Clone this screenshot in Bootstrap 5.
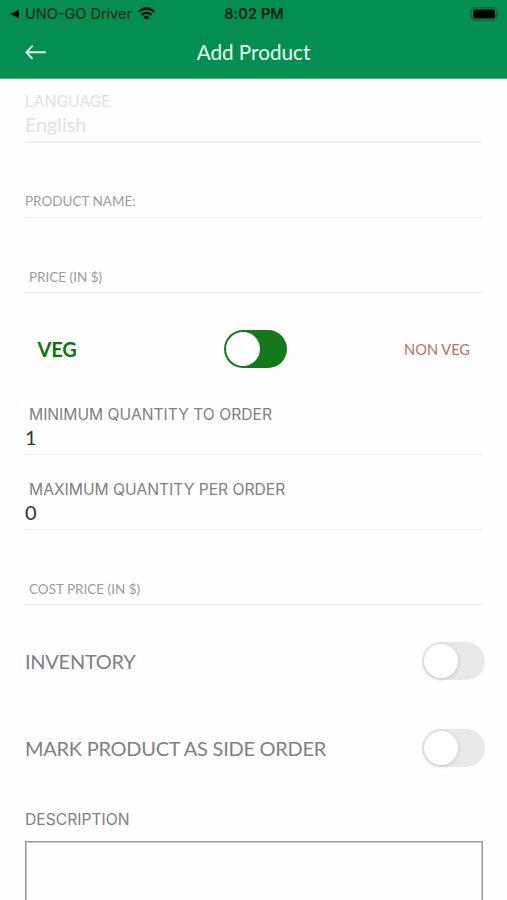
<!DOCTYPE html>
<html lang="en">
<head>
<meta charset="utf-8">
<meta name="viewport" content="width=device-width, initial-scale=1">
<title>Add Product</title>
<link href="https://cdn.jsdelivr.net/npm/bootstrap@5.3.0/dist/css/bootstrap.min.css" rel="stylesheet">
<style>
  body { font-family: Lato, "Open Sans", sans-serif; background: #fefefe; color: #808080; height: 900px; overflow: hidden; }
  .app-head { background: #048e52; height: 79px; border-bottom: 1px solid #45b584; }
  .status { height: 27px; font: 14.5px/27px Inter, sans-serif; color: #06200f; padding: 0 7px 0 10px; }
  .status-side { flex: 1 1 0; }
  .app-name { margin-left: 5px; margin-right: 5px; }
  .clock { letter-spacing: .12px; margin-right: 2px; }
  .title-bar { height: 50px; padding: 0 25px; color: #e9fbf1; font-size: 20.7px; line-height: 50px; }
  .title-side { width: 22px; }
  .form-body { padding: 0 24px 0 25px; }
  .field { height: 75px; border-bottom: 1px solid #eee; white-space: nowrap; padding-bottom: 4px; }
  .field-first { height: 64px; border-bottom: 2px solid #f0f0f0; color: #e0e0e0; margin-right: 1px; }
  .field-hint { padding-bottom: 5px; }
  .field-name { padding-bottom: 6px; }
  .field-money { margin: 0 -1px; padding-left: 1px; }
  .field-tight { height: 51px; }
  .cap { font: 15.65px/20px Inter, sans-serif; }
  .val { font-size: 20px; line-height: 25px; color: #333; }
  .field-first .val { color: inherit; font-size: 19.7px; }
  .hint { font-size: 13.5px; line-height: 20px; color: #9c9c9c; }
  .inset { padding-left: 4px; }
  .veg-row { height: 111px; padding: 0 10px 0 12.5px; }
  .veg-side { flex: 1 1 0; }
  .veg { font-size: 20px; font-weight: 700; color: #0b780f; letter-spacing: -.2px; }
  .nonveg { font-size: 14.6px; color: #b9705f; padding: 2px 3px 0 0; }
  .big { font-size: 20px; line-height: 24px; letter-spacing: -.27px; }
  .toggle { width: 63px; height: 38px; border-radius: 19px; background: #e8e8ea; padding: 2px; margin-right: -2px; }
  .toggle i { display: block; width: 34px; height: 34px; border-radius: 50%; background: #fff; box-shadow: 0 1px 4px rgba(0,0,0,.17); }
  .toggle.on { background: #14791a; margin: 0 -2px 0 2px; }
  .toggle.on i { box-shadow: none; }
  .switch-row { height: 38px; }
  .inventory { margin-top: 37px; }
  .side-order { margin-top: 49px; }
  .desc-label { margin-top: 43px; }
  .desc { height: 90px; border: 1px solid #999; box-shadow: inset 0 0 0 1px #c8c8c8; margin-top: 11px; }
  svg { display: block; }
</style>
</head>
<body>
<header class="app-head">
  <div class="status d-flex align-items-center">
    <div class="status-side d-flex align-items-center">
      <svg width="10" height="10" viewBox="0 0 10 10"><path d="M0 5 9 .8V9.2Z" fill="#000"/></svg>
      <span class="app-name">UNO-GO Driver</span>
      <svg width="19" height="14" viewBox="0 0 20 15" fill="none" stroke="#02140a" stroke-width="2.6"><path d="M1.4 5.3Q10-2.2 18.6 5.3M4.6 8.6Q10 3.9 15.4 8.6"/><path d="M10 14 6.7 10.7Q10 8.2 13.3 10.7Z" fill="#02140a" stroke="none"/></svg>
    </div>
    <span class="clock fw-semibold">8:02 PM</span>
    <div class="status-side d-flex justify-content-end">
      <svg width="30" height="14" viewBox="0 0 30 14"><rect x="1.2" y=".7" width="25.4" height="12.6" rx="4" fill="none" stroke="#03683b" stroke-width="1.4"/><rect x="3" y="2.6" width="22" height="8.8" rx="2" fill="#000"/><path d="M27.8 5Q29.6 7 27.8 9Z" fill="#03683b"/></svg>
    </div>
  </div>
  <div class="title-bar d-flex justify-content-between align-items-center">
    <svg class="title-side" width="22" height="16" viewBox="0 0 22 16" fill="none" stroke="#e4fff0" stroke-width="1.9" stroke-linecap="round" stroke-linejoin="round"><path d="M20 8.3H1.3M7 2.3 1.3 8.3 7 14.3"/></svg>
    <span>Add Product</span>
    <span class="title-side"></span>
  </div>
</header>
<main class="form-body">
  <section class="field field-first d-flex flex-column justify-content-end">
    <span class="cap">LANGUAGE</span><span class="val">English</span>
  </section>
  <section class="field field-name d-flex align-items-end"><span class="hint">PRODUCT NAME:</span></section>
  <section class="field field-hint field-money d-flex align-items-end"><span class="hint inset">PRICE (IN $)</span></section>
  <section class="veg-row d-flex align-items-center">
    <span class="veg-side veg">VEG</span><span class="toggle on"><i></i></span><span class="veg-side nonveg text-end">NON VEG</span>
  </section>
  <section class="field field-tight d-flex flex-column justify-content-end">
    <span class="cap inset">MINIMUM QUANTITY TO ORDER</span><span class="val">1</span>
  </section>
  <section class="field d-flex flex-column justify-content-end">
    <span class="cap inset">MAXIMUM QUANTITY PER ORDER</span><span class="val">0</span>
  </section>
  <section class="field field-hint field-money d-flex align-items-end"><span class="hint inset">COST PRICE (IN $)</span></section>
  <section class="switch-row inventory d-flex justify-content-between align-items-center">
    <span class="big">INVENTORY</span><span class="toggle"><i></i></span>
  </section>
  <section class="switch-row side-order d-flex justify-content-between align-items-center">
    <span class="big">MARK PRODUCT AS SIDE ORDER</span><span class="toggle"><i></i></span>
  </section>
  <div class="desc-label cap">DESCRIPTION</div>
  <div class="desc"></div>
</main>
</body>
</html>
